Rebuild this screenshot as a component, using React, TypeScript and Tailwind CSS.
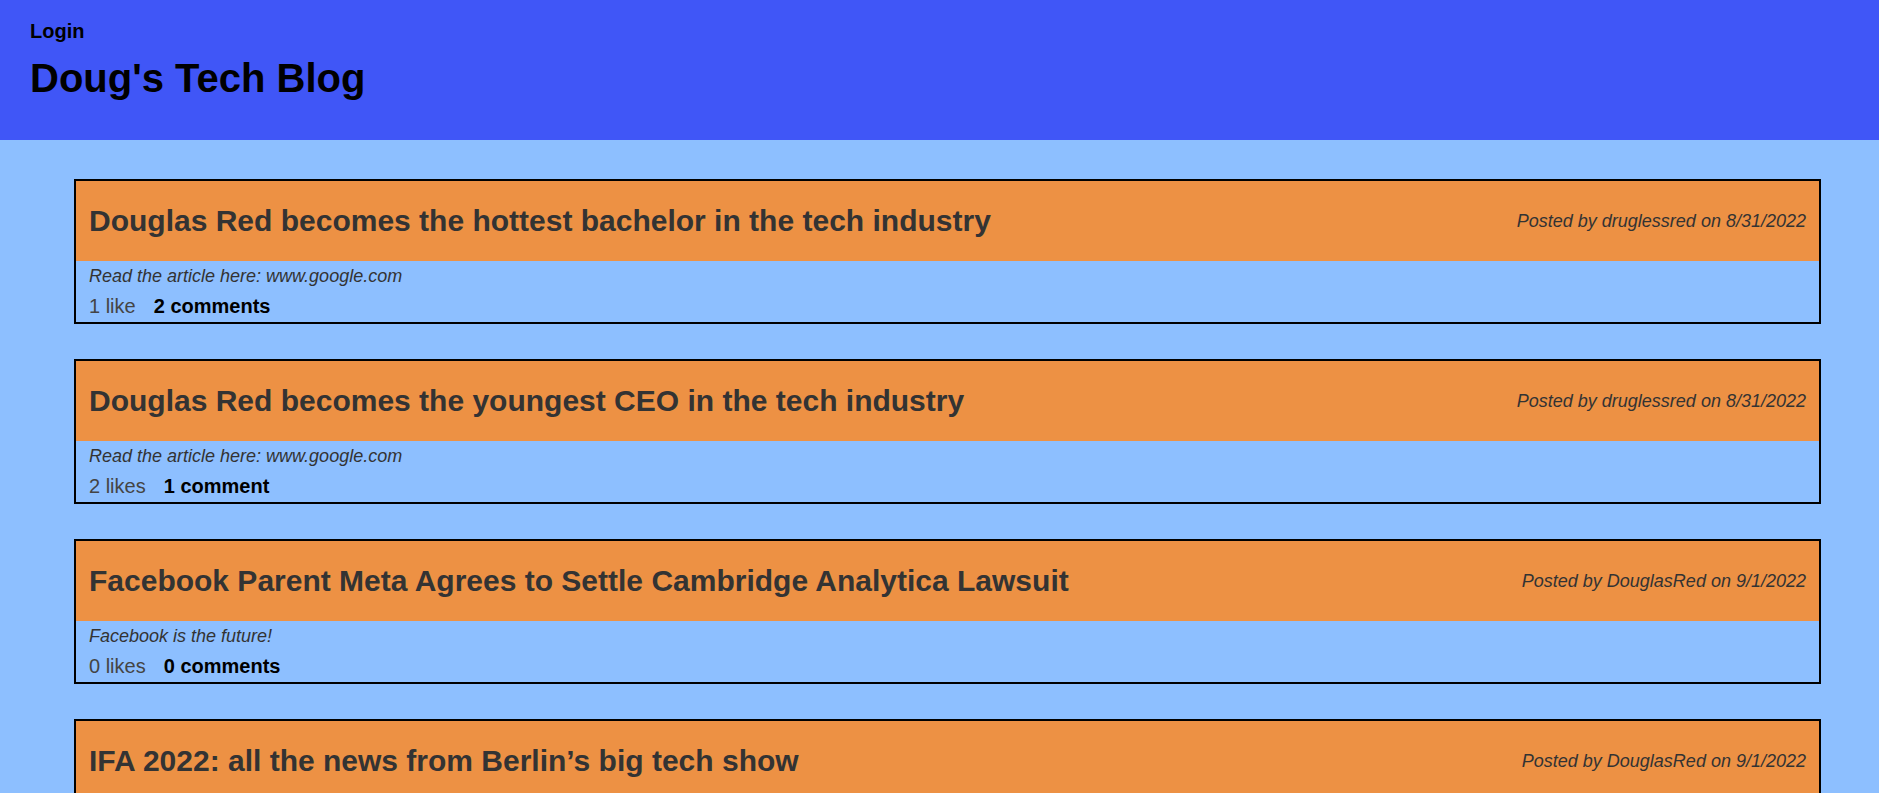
type Post = {
  title: string;
  author: string;
  date: string;
  details?: {
    body: string;
    likes: number;
    comments: number;
  };
};

const posts: Post[] = [
  {
    title: "Douglas Red becomes the hottest bachelor in the tech industry",
    author: "druglessred",
    date: "8/31/2022",
    details: { body: "Read the article here: www.google.com", likes: 1, comments: 2 },
  },
  {
    title: "Douglas Red becomes the youngest CEO in the tech industry",
    author: "druglessred",
    date: "8/31/2022",
    details: { body: "Read the article here: www.google.com", likes: 2, comments: 1 },
  },
  {
    title: "Facebook Parent Meta Agrees to Settle Cambridge Analytica Lawsuit",
    author: "DouglasRed",
    date: "9/1/2022",
    details: { body: "Facebook is the future!", likes: 0, comments: 0 },
  },
  {
    title: "IFA 2022: all the news from Berlin’s big tech show",
    author: "DouglasRed",
    date: "9/1/2022",
  },
];

function count(n: number, noun: string) {
  return `${n} ${noun}${n === 1 ? "" : "s"}`;
}

function PostCard({ post }: { post: Post }) {
  const { title, author, date, details } = post;
  return (
    <article className="border-2 border-black text-[#333333]">
      <header className="flex min-h-20 items-center justify-between gap-6 bg-[#ed9144] px-[13px]">
        <h2 className="text-[30px] leading-9 font-bold">{title}</h2>
        <p className="text-[18px] leading-6 italic">
          Posted by {author} on {date}
        </p>
      </header>
      {details && (
        <div className="px-[13px]">
          <p className="text-[18px] leading-[30px] italic">{details.body}</p>
          <div className="flex gap-[18px] text-[20px] leading-[31px]">
            <span className="text-[#444444]">{count(details.likes, "like")}</span>
            <a href="#comments" className="font-bold text-black">
              {count(details.comments, "comment")}
            </a>
          </div>
        </div>
      )}
    </article>
  );
}

export default function App() {
  return (
    <div className="min-h-screen bg-[#8dbfff] font-['Liberation_Sans',Arial,sans-serif] text-black">
      <header className="bg-[#4056f7] px-[30px] pt-[18px] pb-9">
        <nav className="text-[20px] leading-[26px] font-bold">
          <a href="#login">Login</a>
        </nav>
        <h1 className="pt-2 text-[40px] leading-[52px] font-bold">
          <a href="#home">Doug's Tech Blog</a>
        </h1>
      </header>
      <main className="flex flex-col gap-[35px] pt-[39px] pr-[58px] pb-10 pl-[74px]">
        {posts.map((post) => (
          <PostCard key={post.title} post={post} />
        ))}
      </main>
    </div>
  );
}
